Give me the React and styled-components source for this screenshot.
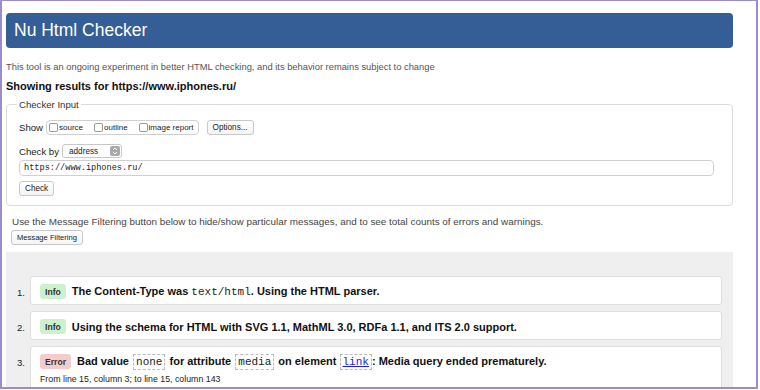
import styled, { createGlobalStyle } from 'styled-components';

const __BLUE = '#365e96';
const __FRAME = '#9b8dc9';
const __LINE = '#dcdcdc';

const GlobalStyle = createGlobalStyle`
    html, body {
        margin:0;
        padding:0;
        background:#ffffff;
    }
    * {
        box-sizing:border-box;
    }
`;

const Frame = styled.div`
    width:758px;
    height:389px;
    border:2px solid ${__FRAME};
    border-top-width:1px;
    padding:12px 23px 0 4px;
    overflow:hidden;
    font-family:"Liberation Sans", Arial, sans-serif;
    color:#222;
`;

const Header = styled.h1`
    margin:0;
    height:35px;
    display:flex;
    align-items:center;
    padding-left:8px;
    background:${__BLUE};
    border-radius:4px;
    color:#fff;
    font-size:17.5px;
    font-weight:400;
`;

const Intro = styled.p`
    margin:14px 0 0 0;
    font-size:9.35px;
    color:#555;
`;

const ResultsTitle = styled.h2`
    margin:8px 0 0 0;
    font-size:11px;
    font-weight:700;
    color:#111;
`;

const Fieldset = styled.fieldset`
    margin:7px 0 0 0;
    padding:6px 12px 9px 12px;
    border:1px solid ${__LINE};
    border-radius:4px;
`;

const Legend = styled.legend`
    padding:0 2px;
    margin-left:-2px;
    font-size:9.6px;
    color:#333;
`;

const Row = styled.div`
    display:flex;
    align-items:center;
    gap:${p => p.gap || 3}px;
    margin-top:${p => p.top || 0}px;
    font-size:9.6px;
    color:#222;
`;

const Group = styled.div`
    display:flex;
    align-items:center;
    gap:6px;
    height:15px;
    padding:0 4px 0 2px;
    border:1px solid #cfcfcf;
    border-radius:4px;
    font-size:8px;
`;

const Check = styled.label`
    display:flex;
    align-items:center;
    gap:1px;
    padding-right:${p => p.pad || 0}px;
`;

const Box = styled.span`
    width:9px;
    height:9px;
    border:1px solid #9a9a9a;
    border-radius:2px;
    background:#fff;
`;

const Button = styled.button`
    height:15px;
    padding:0 5px;
    border:1px solid #c8c8c8;
    border-radius:3px;
    background:linear-gradient(#ffffff, #f4f4f4);
    font-family:"Liberation Sans", Arial, sans-serif;
    font-size:${p => p.size || 8.2}px;
    color:#222;
    margin-left:${p => p.left || 0}px;
`;

const Select = styled.div`
    display:flex;
    align-items:center;
    justify-content:space-between;
    width:60px;
    height:14px;
    padding:0 1px 0 6px;
    border:1px solid #c8c8c8;
    border-radius:3px;
    font-size:8.2px;
    background:#fff;
`;

const Stepper = styled.span`
    width:10px;
    height:10px;
    border-radius:2px;
    background:#a9a9a9;
    display:flex;
    align-items:center;
    justify-content:center;
`;

const UrlInput = styled.div`
    margin-top:2px;
    width:695px;
    height:16px;
    padding-left:4px;
    display:flex;
    align-items:center;
    border:1px solid #d0d0d0;
    border-radius:4px;
    font-family:"Liberation Mono", "Courier New", monospace;
    font-size:8.6px;
    color:#222;
`;

const FilterNote = styled.p`
    margin:10px 0 0 6px;
    font-size:9.9px;
    color:#444;
`;

const Results = styled.ol`
    margin:7px 0 0 0;
    padding:24px 11px 30px 24px;
    background:#efefef;
    list-style:none;
    display:flex;
    flex-direction:column;
    gap:6px;
`;

const Item = styled.li`
    position:relative;
    min-height:29px;
    padding:7px 9px 5px 9px;
    background:#fff;
    border:1px solid #dedede;
    border-radius:3px;
`;

const Num = styled.span`
    position:absolute;
    left:-14px;
    top:10px;
    font-size:9.6px;
    color:#222;
`;

const Line = styled.div`
    display:flex;
    align-items:center;
    gap:6px;
    height:15px;
    font-size:11px;
    font-weight:700;
    color:#111;
`;

const Badge = styled.span`
    padding:3px 5px 2px 5px;
    border-radius:3px;
    font-size:8.6px;
    font-weight:700;
    color:#333;
    background:${p => (p.kind === 'error' ? '#f5cccc' : '#cdf1cd')};
`;

const Code = styled.code`
    font-family:"Liberation Mono", "Courier New", monospace;
    font-weight:400;
    font-size:11px;
    color:#222;
    border:${p => (p.boxed ? '1px dashed #bbb' : 'none')};
    padding:${p => (p.boxed ? '1px 2px' : '0')};
    margin:${p => (p.boxed ? '0 1px' : '0')};
`;

const CodeLink = styled.a`
    font-family:"Liberation Mono", "Courier New", monospace;
    font-weight:400;
    font-size:11px;
    color:#1a1aee;
    border:1px dashed #bbb;
    padding:1px 2px;
`;

const Where = styled.div`
    margin-top:5px;
    font-size:8.8px;
    font-weight:400;
    color:#222;
`;

const Arrows = () => (
    <svg width="6" height="8" viewBox="0 0 6 8">
        <path d="M1 3 L3 1 L5 3 M1 5 L3 7 L5 5" fill="none" stroke="#fff" strokeWidth="1" />
    </svg>
);

const App = () => {
    return (
        <>
            <GlobalStyle />
            <Frame>
                <Header>Nu Html Checker</Header>
                <Intro>This tool is an ongoing experiment in better HTML checking, and its behavior remains subject to change</Intro>
                <ResultsTitle>Showing results for https://www.iphones.ru/</ResultsTitle>

                <Fieldset>
                    <Legend>Checker Input</Legend>
                    <Row top={4}>
                        Show
                        <Group>
                            <Check pad={5}><Box />source</Check>
                            <Check pad={5}><Box />outline</Check>
                            <Check><Box />image report</Check>
                        </Group>
                        <Button left={5}>Options...</Button>
                    </Row>
                    <Row top={9}>
                        Check by
                        <Select>address<Stepper><Arrows /></Stepper></Select>
                    </Row>
                    <UrlInput>https://www.iphones.ru/</UrlInput>
                    <Row top={5}>
                        <Button>Check</Button>
                    </Row>
                </Fieldset>

                <FilterNote>Use the Message Filtering button below to hide/show particular messages, and to see total counts of errors and warnings.</FilterNote>
                <Row top={3}>
                    <Button left={5} size={7.6}>Message Filtering</Button>
                </Row>

                <Results>
                    <Item>
                        <Num>1.</Num>
                        <Line><Badge>Info</Badge><span>The Content-Type was <Code>text/html</Code>. Using the HTML parser.</span></Line>
                    </Item>
                    <Item>
                        <Num>2.</Num>
                        <Line><Badge>Info</Badge>Using the schema for HTML with SVG 1.1, MathML 3.0, RDFa 1.1, and ITS 2.0 support.</Line>
                    </Item>
                    <Item>
                        <Num>3.</Num>
                        <Line>
                            <Badge kind="error">Error</Badge>
                            <span>Bad value <Code boxed>none</Code> for attribute <Code boxed>media</Code> on element <CodeLink href="#">link</CodeLink>: Media query ended prematurely.</span>
                        </Line>
                        <Where>From line 15, column 3; to line 15, column 143</Where>
                    </Item>
                </Results>
            </Frame>
        </>
    );
}

export default App;
